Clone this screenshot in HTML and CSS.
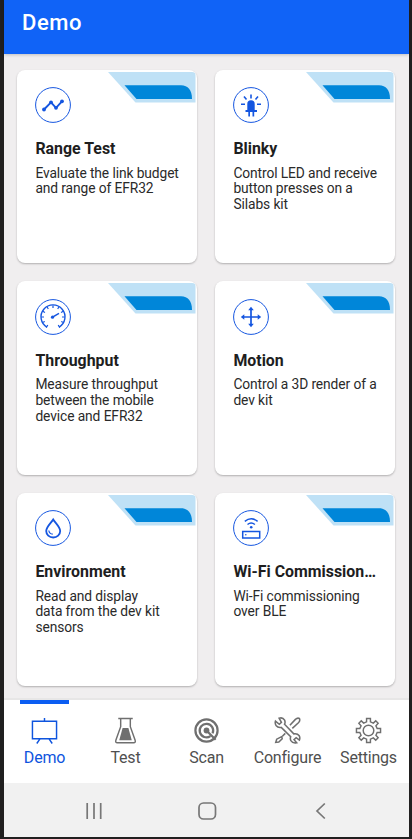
FILE: index.html
```html
<!DOCTYPE html>
<html lang="en">
<head>
<meta charset="utf-8">
<title>Demo</title>
<link rel="stylesheet" href="styles.css">
</head>
<body>
<svg class="defs" width="0" height="0"><defs>
<symbol id="ribbon" viewBox="0 0 88 31"><path d="M0 0H84Q87.500 0 87.500 3V30.500H27.500Z" fill="#bfe1f6"/><path d="M16.500 13.300H73C80 13.300 84 18 84 27H28.500Z" fill="#0086d9"/></symbol>
</defs></svg>
<div class="phone">
<header class="bar"><h1>Demo</h1></header>
<main class="grid">
<article class="card">
<svg class="ribbon"><use href="#ribbon"/></svg>
<svg class="icon" viewBox="0 0 36 36"><circle class="ring" cx="18" cy="18" r="17.400"/><path class="ln" d="M9 22.500 16 15.300 21 20.800 27 14.300" stroke-width="1.900"/><g fill="#1556e0"><circle cx="9" cy="22.500" r="1.900"/><circle cx="16" cy="15.300" r="1.900"/><circle cx="21" cy="20.800" r="1.900"/><circle cx="27" cy="14.300" r="1.900"/></g></svg>
<h2>Range Test</h2><p>Evaluate the link budget<br>and range of EFR32</p>
</article>
<article class="card">
<svg class="ribbon"><use href="#ribbon"/></svg>
<svg class="icon" viewBox="0 0 36 36"><circle class="ring" cx="18" cy="18" r="17.400"/><path fill="#1556e0" d="M14.300 23V17a3.700 3.700 0 0 1 7.400 0V23H24V25H21.200V29.500H19.500V25H17V29.500H15.300V25H12.500V23Z"/><path class="ln" d="M18 7.500V11.500M11 9.500 13.500 12.500M25 9.500 22.500 12.500M8 17.300H12M24 17.300H28" stroke-width="1.600"/></svg>
<h2>Blinky</h2><p>Control LED and receive<br>button presses on a<br>Silabs kit</p>
</article>
<article class="card">
<svg class="ribbon"><use href="#ribbon"/></svg>
<svg class="icon" viewBox="0 0 36 36"><circle class="ring" cx="18" cy="18" r="17.400"/><path class="ln" d="M12 28.300A12 12 0 1 1 24 28.300" stroke-width="1.400"/><path class="ln" d="M11.300 28.300 12.800 26M24.700 28.300 23.200 26M6.500 18H9M27 18H29.500M7.700 12.300 10 13.500M12 7.800 13.300 10M18 6.500V9M24 7.800 22.700 10M28.300 12.300 26 13.500M7.500 23.500 9.800 22.500M28.500 23.500 26.200 22.500" stroke-width="1.200"/><path class="ln" d="M17.500 18.200 24 14.300" stroke-width="1.500"/><circle cx="17.500" cy="18.200" r="1.600" fill="#1556e0"/></svg>
<h2>Throughput</h2><p>Measure throughput<br>between the mobile<br>device and EFR32</p>
</article>
<article class="card">
<svg class="ribbon"><use href="#ribbon"/></svg>
<svg class="icon" viewBox="0 0 36 36"><circle class="ring" cx="18" cy="18" r="17.400"/><path class="ln" d="M18 9V27M9 18H27" stroke-width="1.700"/><path fill="#1556e0" d="M18 7.800 20.800 11.300H15.200ZM18 28.200 20.800 24.700H15.200ZM7.800 18 11.300 15.200V20.800ZM28.200 18 24.700 15.200V20.800Z"/></svg>
<h2>Motion</h2><p>Control a 3D render of a<br>dev kit</p>
</article>
<article class="card">
<svg class="ribbon"><use href="#ribbon"/></svg>
<svg class="icon" viewBox="0 0 36 36"><circle class="ring" cx="18" cy="18" r="17.400"/><path class="ln" d="M18.200 9.500C16.200 12.800 11.200 17 11.200 21a7 6.500 0 0 0 14 0C25.200 17 20.200 12.800 18.200 9.500Z" stroke-width="1.800"/><path class="ln" d="M13.800 20.500Q14.300 24 17.800 24.200" stroke-width="1.200"/></svg>
<h2>Environment</h2><p>Read and display<br>data from the dev kit<br>sensors</p>
</article>
<article class="card">
<svg class="ribbon"><use href="#ribbon"/></svg>
<svg class="icon" viewBox="0 0 36 36"><circle class="ring" cx="18" cy="18" r="17.400"/><path class="ln" d="M11.800 11.300Q18.200 6.300 24.600 11.300M14.500 14.500Q18.200 11.500 21.900 14.500" stroke-width="1.500"/><circle cx="18.200" cy="17.200" r="1.300" fill="#1556e0"/><rect class="ln" x="9.700" y="21.500" width="17" height="6.500" stroke-width="1.500"/><circle cx="12.800" cy="24.700" r=".8" fill="#1556e0"/></svg>
<h2>Wi-Fi Commission…</h2><p>Wi-Fi commissioning<br>over BLE</p>
</article>
</main>
<nav class="tabs">
<a class="tab active"><svg viewBox="0 0 28 28"><path d="M1.500 4.500H26.500V22.500H1.500ZM14 1V4.500M9.500 22.500 6 27.500M18.500 22.500 22 27.500"/></svg><span>Demo</span></a>
<a class="tab"><svg viewBox="0 0 28 28"><path d="M6.500 1.500H21.500M9 2V10L4 24Q3.300 26.800 5.500 26.800H22.500Q24.700 26.800 24 24L19 10V2"/><path fill="currentColor" stroke="none" d="M11 11.500H17L20.500 24H7.500Z"/></svg><span>Test</span></a>
<a class="tab"><svg viewBox="0 0 28 28"><g stroke-width="2.300"><circle cx="14" cy="14" r="11.500"/><path d="M18 19.800A7 7 0 1 1 20.300 17M14.500 14.500 23.500 23.500"/></g><circle cx="14" cy="14" r="3" fill="currentColor" stroke="none"/></svg><span>Scan</span></a>
<a class="tab"><svg viewBox="0 0 28 28"><path stroke-width="1.600" d="M1.500 4.300 5.500 7.500 7.700 5.500 5.300 1.300Q9 0 11 3.200 12 5.500 10.900 7.500L20.500 17.500Q24.200 16.800 26.200 19.500 27.300 21.800 26.300 24L23 21.500 20.800 23.500 23.500 26.700Q19.300 27.500 17.500 24.500 16.500 22.500 17.300 20.500L7.500 10.800Q4.200 11.500 2.100 8.800 .8 6.500 1.500 4.300ZM16.500 8.500 22.200 2.500Q24.300 .5 26.300 1.500 27.500 3.800 25.300 6L19 11.800M11.700 17 8.700 20M8 20.300 2.800 23 1.800 26.300 5 26 8.500 22.500Z"/></svg><span>Configure</span></a>
<a class="tab"><svg viewBox="0 0 28 28"><path d="M12 1.500H16V5L19 6.300 21.500 4 24 6.500 21.700 9.200 23 12H26.500V16H23L21.700 19 24 21.500 21.500 24 19 21.700 16 23V26.500H12V23L9 21.700 6.500 24 4 21.500 6.300 19 5 16H1.500V12H5L6.300 9.200 4 6.500 6.500 4 9 6.300 12 5Z"/><circle cx="14" cy="14" r="5.500"/></svg><span>Settings</span></a>
</nav>
<div class="system">
<svg viewBox="0 0 24 24"><path d="M5.200 4V20M12 4V20M18.700 4V20"/></svg>
<svg viewBox="0 0 24 24"><rect x="4" y="4" width="16.500" height="16" rx="4.500"/></svg>
<svg viewBox="0 0 24 24"><path d="M16.800 4.500 9 12 16.800 19.500"/></svg>
</div>
</div>
</body>
</html>
```
FILE: styles.css
```css
* { box-sizing: border-box; }
body { margin: 0; width: 412px; height: 839px; background: #201f1f; font-family: Roboto, sans-serif; overflow: hidden; }
h1, h2, p { margin: 0; }
.defs { display: block; }
.phone { display: flex; flex-direction: column; width: 405px; height: 837px; margin-left: 4px; background: #f0eeef; }
.bar { height: 54px; flex: none; padding: 9px 0 0 18px; background: #1063f7; color: #fff; box-shadow: 0 1px 3px #0003; }
h1 { font-size: 22px; line-height: 28px; font-weight: 500; letter-spacing: .6px; }
.grid { flex: none; height: 646px; padding: 15.500px 13px 0 13.400px; display: grid; grid-template-columns: 180px 180px; grid-auto-rows: 193.500px; gap: 18px; border-bottom: 2px solid #e7e6e6; }
.card { position: relative; padding: 17.500px 12px 0 18px; border-radius: 8px; background: #fff; box-shadow: 0 1px 2px #0004; }
.ribbon { position: absolute; top: 2px; right: 1px; width: 88px; height: 31px; }
.icon { display: block; width: 36px; height: 36px; }
.ring { fill: none; stroke: #1556e0; stroke-width: 1; }
.ln { fill: none; stroke: #1556e0; }
h2 { margin-top: 15px; font-size: 15.900px; line-height: 22px; font-weight: 700; color: #1e1e1e; white-space: nowrap; }
.card p { margin-top: 5.700px; font-size: 13.800px; line-height: 15.700px; letter-spacing: -.1px; color: #2a2a2a; white-space: nowrap; }
.tabs { height: 83px; flex: none; display: grid; grid-template-columns: repeat(5, 1fr); background: #fff; }
.tab { position: relative; display: flex; flex-direction: column; align-items: center; padding-top: 17px; color: #4f4f4f; font-size: 16px; letter-spacing: -.2px; line-height: 20px; }
.tab svg { width: 27px; height: 27px; margin-bottom: 4px; fill: none; stroke: currentColor; stroke-width: 1.500; color: #6f6f6f; }
.tab.active, .tab.active svg { color: #0e54de; }
.tab.active::before { content: ""; position: absolute; top: 0; left: 16px; width: 49px; height: 4px; background: #0b5df2; }
.system { flex: 1; display: flex; justify-content: space-between; align-items: center; padding: 2px 77px 0 78px; background: #f1f1f1; }
.system svg { width: 24px; height: 24px; fill: none; stroke: #777; stroke-width: 1.700; }
```
